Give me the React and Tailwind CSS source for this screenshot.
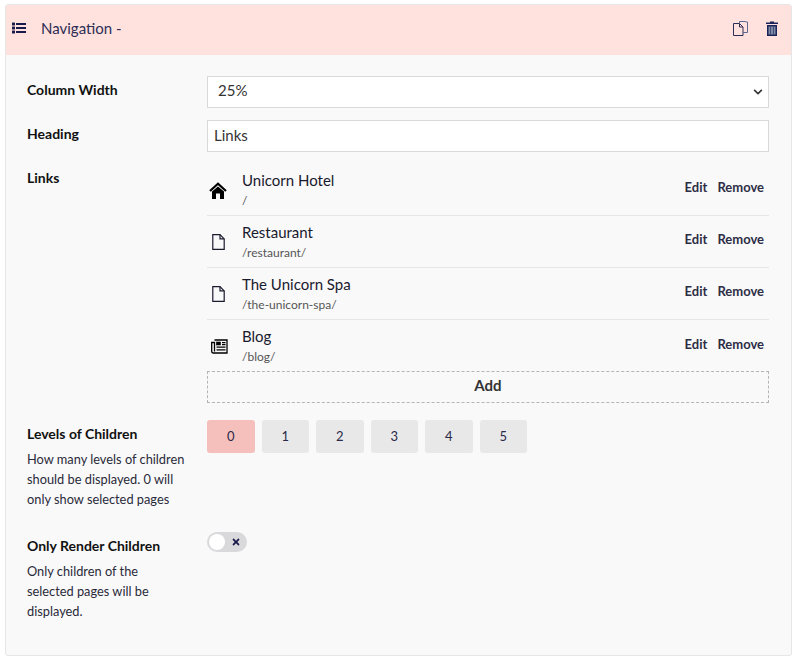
import { FaChevronDown, FaTimes } from "react-icons/fa";

const links = [
  { title: "Unicorn Hotel", url: "/", icon: "home" },
  { title: "Restaurant", url: "/restaurant/", icon: "file" },
  { title: "The Unicorn Spa", url: "/the-unicorn-spa/", icon: "file" },
  { title: "Blog", url: "/blog/", icon: "news" },
];

const levels = [0, 1, 2, 3, 4, 5];

const ListIcon = () => (
  <svg width="14" height="12" viewBox="0 0 14 12" fill="#1a1a4a">
    <rect x="0" y="0.5" width="3" height="3" rx="0.5" />
    <rect x="0" y="4.5" width="3" height="3" rx="0.5" />
    <rect x="0" y="8.5" width="3" height="3" rx="0.5" />
    <rect x="4" y="1" width="10" height="2" />
    <rect x="4" y="5" width="10" height="2" />
    <rect x="4" y="9" width="10" height="2" />
  </svg>
);

const CopyIcon = () => (
  <svg width="15" height="15" viewBox="0 0 15 15" fill="none" stroke="#2d2d55" strokeWidth="1">
    <path d="M0.5 2.5H6.5L10 6V14.5H0.5Z" />
    <path d="M6.5 2.5V6H10" />
    <path d="M6.5 2.5V0.5H11L14.5 1V11.5H10" stroke="#5a6a90" />
  </svg>
);

const TrashIcon = () => (
  <svg width="12" height="15" viewBox="0 0 12 15">
    <path d="M4 0.5H8V1.5H12V3H0V1.5H4Z" fill="#1a2458" />
    <path d="M1 4H11V15H1Z" fill="#1a2458" />
    <path d="M2.5 5.5H9.5V13.5H2.5Z" fill="#7f8aa5" />
    <path d="M4.4 5.5H5V13.5H4.4ZM7 5.5H7.6V13.5H7Z" fill="#1a2458" />
  </svg>
);

const HomeIcon = () => (
  <svg width="18" height="17" viewBox="0 0 18 17">
    <path d="M1 9L9 1.8L17 9" fill="none" stroke="#000" strokeWidth="2.2" />
    <path d="M3 9.5L9 4.5L15 9.5V17H11V11.5H7V17H3Z" fill="#000" />
  </svg>
);

const FileIcon = () => (
  <svg width="13" height="16" viewBox="0 0 13 16" fill="none" stroke="#1a1a2e" strokeWidth="1.2">
    <path d="M0.8 0.7H8L12.2 4.9V15.3H0.8Z" />
    <path d="M8 0.7V4.9H12.2" />
  </svg>
);

const NewsIcon = () => (
  <svg width="17" height="15" viewBox="0 0 17 15" fill="none" stroke="#000" strokeWidth="1.3">
    <path d="M3.5 1H16V14H2.2A1.5 1.5 0 0 1 0.7 12.5V3.5H3.5V12.5" />
    <rect x="5.5" y="3" width="4" height="3" fill="#000" strokeWidth="0.6" />
    <path d="M11 3.6H14.5M11 5.6H14.5M5.5 8.2H14.5M5.5 10.8H14.5" strokeWidth="1.2" />
  </svg>
);

const LinkIcon = ({ icon }) => {
  if (icon === "home") return <HomeIcon />;
  if (icon === "news") return <NewsIcon />;
  return <FileIcon />;
};

const Row = ({ label, help, children, className }) => {
  return (
    <div className={"flex " + className}>
      <div className="w-[180px] shrink-0 pr-5 pt-1">
        <div className="text-[14px] leading-[20px] font-bold text-[#111]">{label}</div>
        {help && <p className="mt-[5px] text-[12.8px] leading-[20px] text-[#2a2a3a]">{help}</p>}
      </div>
      <div className="flex-1 min-w-0">{children}</div>
    </div>
  );
};

const App = () => {
  return (
    <div className="w-[797px] h-[660px] bg-white pt-1 px-[5px] font-['Lato','Noto_Sans',sans-serif]">
      <div className="w-[787px] h-[652px] border border-[#e6e6e6] rounded-[3px] bg-[#f9f9f9] overflow-hidden">
        <div className="h-[50px] bg-[#ffe1de] flex items-center pl-[6px] pr-[13px] pb-1 text-[#2d2d55]">
          <ListIcon />
          <span className="ml-[15px] text-[15px]">Navigation -</span>
          <span className="ml-auto flex">
            <CopyIcon />
          </span>
          <span className="ml-[18px] flex">
            <TrashIcon />
          </span>
        </div>

        <div className="pl-[21px] pr-[22px] pt-[21px]">
          <Row label="Column Width" className="items-start">
            <div className="h-8 border border-[#d9d9d9] bg-white flex items-center pl-[10px] pr-[5px] pb-[3px] text-[15px] text-[#333]">
              <span>25%</span>
              <FaChevronDown className="ml-auto mt-[3px] text-[10px] text-[#333]" />
            </div>
          </Row>
          <Row label="Heading" className="mt-3 items-start">
            <div className="h-8 border border-[#d9d9d9] bg-white flex items-center pl-[6px] pb-[2px] text-[15px] text-[#333]">
              Links
            </div>
          </Row>
          <Row label="Links" className="mt-3 items-start">
            <div>
              {links.map((link, i) => (
                <div
                  key={link.title}
                  className={"h-[52px] flex items-center pr-[5px] " + (i < 3 ? "border-b border-[#e6e6e6]" : "")}
                >
                  <div className={"w-[25px] flex justify-center mr-[10px] " + (link.icon === "news" ? "" : "pt-[1px] pr-[3px]")}>
                    <LinkIcon icon={link.icon} />
                  </div>
                  <div>
                    <div className="text-[15px] leading-[20px] text-[#1a1a2e]">{link.title}</div>
                    <div className="text-[12px] leading-[18px] mt-[2px] text-[#555]">{link.url}</div>
                  </div>
                  <div className="ml-auto flex gap-[10px] pb-[3px] text-[13px] font-bold text-[#2d2d45]">
                    <span>Edit</span>
                    <span>Remove</span>
                  </div>
                </div>
              ))}
              <div className="h-8 -mt-[1px] pb-1 border border-dashed border-[#b5b5b5] flex items-center justify-center text-[15px] font-bold text-[#333]">
                Add
              </div>
            </div>
          </Row>
          <Row
            label="Levels of Children"
            help="How many levels of children should be displayed. 0 will only show selected pages"
            className="mt-[17px] items-start"
          >
            <div className="flex gap-[7px]">
              {levels.map((level) => (
                <div
                  key={level}
                  className={
                    "w-[47.5px] h-[33px] rounded-[3px] flex items-center justify-center text-[13px] text-[#2a2a4a] " +
                    (level === 0 ? "bg-[#f5c0bc]" : "bg-[#e8e8e8]")
                  }
                >
                  {level}
                </div>
              ))}
            </div>
          </Row>
          <Row
            label="Only Render Children"
            help="Only children of the selected pages will be displayed."
            className="mt-[23px] items-start"
          >
            <div className="w-10 h-5 rounded-full bg-[#d9d9dc] flex items-center pl-[2px]">
              <div className="w-4 h-4 rounded-full bg-white" />
              <FaTimes className="ml-[6px] text-[10px] text-[#1a1a4a]" />
            </div>
          </Row>
        </div>
      </div>
    </div>
  );
};

export default App;
